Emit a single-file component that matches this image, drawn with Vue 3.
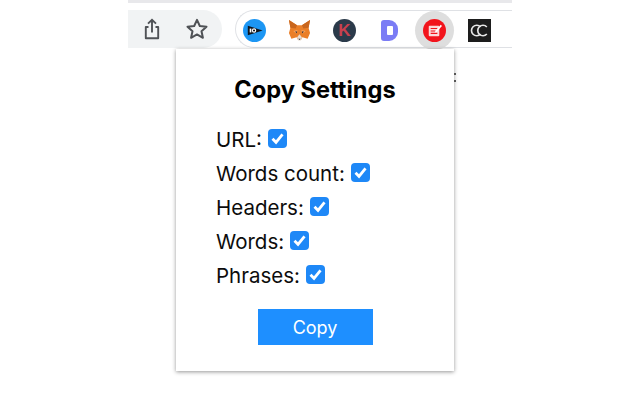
<template>
  <div class="page">
    <div class="top-line"></div>
    <div class="toolbar">
      <div class="actions">
        <svg class="action" width="24" height="24" viewBox="0 0 24 24" fill="none" stroke="#4f5256" stroke-width="1.9">
          <path d="M8.500 10H5.800v11.200h12.400V10h-2.700" stroke-linejoin="round" />
          <path d="M12 15.500V3M8 6.600 12 2.800l4 3.800" />
        </svg>
        <svg class="action" width="24" height="24" viewBox="0 0 24 24" fill="none" stroke="#4f5256" stroke-width="2">
          <path d="m12 2.800 2.800 6.200 6.700.7-5 4.500 1.400 6.600-5.900-3.400-5.900 3.400L7.500 14.200l-5-4.500 6.700-.7z" stroke-linejoin="round" />
        </svg>
      </div>
      <div class="extensions">
        <div class="slots">
          <div class="slot">
            <svg width="23" height="23" viewBox="0 0 24 24">
              <circle cx="12" cy="12" r="12" fill="#1c96f3" />
              <path d="M5 7 20.500 12 5 17z" fill="#10151c" />
              <rect x="7" y="10" width="1.700" height="4" fill="#fff" />
              <circle cx="11.500" cy="12" r="1.700" fill="none" stroke="#fff" stroke-width="1.200" />
            </svg>
          </div>
          <div class="slot">
            <svg width="23" height="23" viewBox="0 0 24 24">
              <path d="M1 1 9.500 6.500h5L23 1l-1.500 8 1.500 5.500-2.500 6-5.500-1.500-1.500 3h-3L9 19l-5.500 1.500-2.500-6L2.500 9z" fill="#ea7f28" />
              <path d="M1 1 9.500 6.500 8 10 2.500 9zM23 1l-8.500 5.500L16 10l5.500-1z" fill="#c9661d" />
              <path d="M5.500 12.500 10 11.500 9 15.500zM18.500 12.500 14 11.500 15 15.500z" fill="#f4a562" />
              <path d="M7.500 13 9.500 13 9 15zM16.500 13 14.500 13 15 15z" fill="#2c2a33" />
              <path d="M9.500 19 12 16l2.500 3-1 3.500h-3z" fill="#e8dccf" />
              <path d="M10.800 20.500h2.400L12 22z" fill="#2c2a33" />
            </svg>
          </div>
          <div class="slot"><div class="k-badge">K</div></div>
          <div class="slot"><div class="d-logo"><span></span></div></div>
          <div class="slot">
            <div class="active">
              <svg width="23" height="23" viewBox="0 0 24 24">
                <circle cx="12" cy="12" r="12" fill="#f2141c" />
                <rect x="6" y="7" width="11" height="11" rx="1" fill="#fbd9d9" />
                <path d="M8 10h7M8 12.500h5M8 15h7" stroke="#f2141c" stroke-width="1.100" />
                <path d="M13 12.500 18.500 6l1.300 1.200-5.500 6.300-1.700.5z" fill="#fff" />
              </svg>
            </div>
          </div>
          <div class="slot">
            <svg width="23" height="23" viewBox="0 0 22 22">
              <rect width="22" height="22" fill="#1d1d1d" />
              <path d="M12 7.600a5 5 0 1 0 0 6.800" fill="none" stroke="#e8e8e8" stroke-width="1.600" />
              <path d="M18 7.600a5 5 0 1 0 0 6.800" fill="none" stroke="#e8e8e8" stroke-width="1.600" />
            </svg>
          </div>
        </div>
      </div>
    </div>

    <div class="popup">
      <h1>Copy Settings</h1>
      <div v-for="item in options" :key="item" class="row">
        <span>{{ item }}:</span>
        <span class="checkbox">
          <svg width="19" height="19" viewBox="0 0 19 19" fill="none" stroke="#fff" stroke-width="2.800">
            <path d="m4.500 9.800 3.500 3.500 6.500-8" />
          </svg>
        </span>
      </div>
      <button class="copy">Copy</button>
      <span class="edge-mark"></span>
    </div>
  </div>
</template>

<script setup>
const options = ["URL", "Words count", "Headers", "Words", "Phrases"];
</script>

<style>
html,
body {
  margin: 0;
  background: #fff;
}
</style>

<style scoped>
.page {
  position: relative;
  width: 640px;
  height: 400px;
  overflow: hidden;
  background: #fff;
  font-family: Inter, "Liberation Sans", sans-serif;
  color: #111;
}

.top-line {
  height: 3px;
  margin-left: 128px;
  width: 384px;
  background: #e8e8eb;
}

.toolbar {
  display: flex;
  align-items: center;
  gap: 13px;
  width: 384px;
  height: 39px;
  margin: 6px 0 0 128px;
}

.actions {
  display: flex;
  align-items: center;
  gap: 21px;
  width: 94px;
  height: 38px;
  box-sizing: border-box;
  padding-left: 12px;
  background: #f1f3f4;
  border-radius: 0 19px 19px 0;
}

.extensions {
  flex: 1;
  height: 38px;
  box-sizing: border-box;
  border: 1px solid #dfe1e5;
  border-right: none;
  border-radius: 19px 0 0 19px;
}

.slots {
  display: grid;
  grid-template-columns: repeat(6, 45.2px);
  align-items: center;
  justify-items: center;
  height: 100%;
  margin-left: -4.600px;
}

.slot {
  display: flex;
}

.k-badge {
  width: 23px;
  height: 23px;
  border-radius: 50%;
  background: #2b3a4a;
  color: #c9404e;
  font-family: "Liberation Sans", sans-serif;
  font-size: 17px;
  font-weight: 700;
  line-height: 23px;
  text-align: center;
}

.d-logo {
  display: flex;
  align-items: center;
  justify-content: center;
  width: 17px;
  height: 21px;
  background: #7b7cf5;
  border-radius: 3px 9px 9px 3px;
}

.d-logo span {
  width: 6px;
  height: 9px;
  background: #fff;
  border-radius: 1px;
}

.active {
  display: flex;
  align-items: center;
  justify-content: center;
  width: 39px;
  height: 39px;
  background: #dedede;
  border-radius: 50%;
}

.popup {
  position: absolute;
  left: 176px;
  top: 49px;
  width: 278px;
  height: 322px;
  box-sizing: border-box;
  padding: 26px 40px 0;
  background: #fff;
  box-shadow: 0 1px 4px rgba(0, 0, 0, 0.42);
}

h1 {
  margin: 0 0 17px;
  font-size: 23.600px;
  line-height: 30px;
  font-weight: 700;
  text-align: center;
  color: #000;
}

.row {
  display: flex;
  align-items: center;
  gap: 6px;
  height: 34px;
  font-size: 20.500px;
  color: #0c0c0c;
}

.checkbox {
  display: block;
  width: 19px;
  height: 19px;
  margin-top: -1px;
  background: #1e88f7;
  border-radius: 4px;
}

.checkbox svg {
  display: block;
}

.copy {
  display: block;
  width: 115px;
  height: 36px;
  margin: 17px auto 0;
  padding: 0;
  border: none;
  background: #1e8fff;
  color: #fff;
  font-family: inherit;
  font-size: 18px;
}

.edge-mark {
  position: absolute;
  right: -2px;
  top: 24px;
  width: 2px;
  height: 9px;
  background: linear-gradient(#555 0 2px, transparent 2px 7px, #555 7px);
}
</style>
